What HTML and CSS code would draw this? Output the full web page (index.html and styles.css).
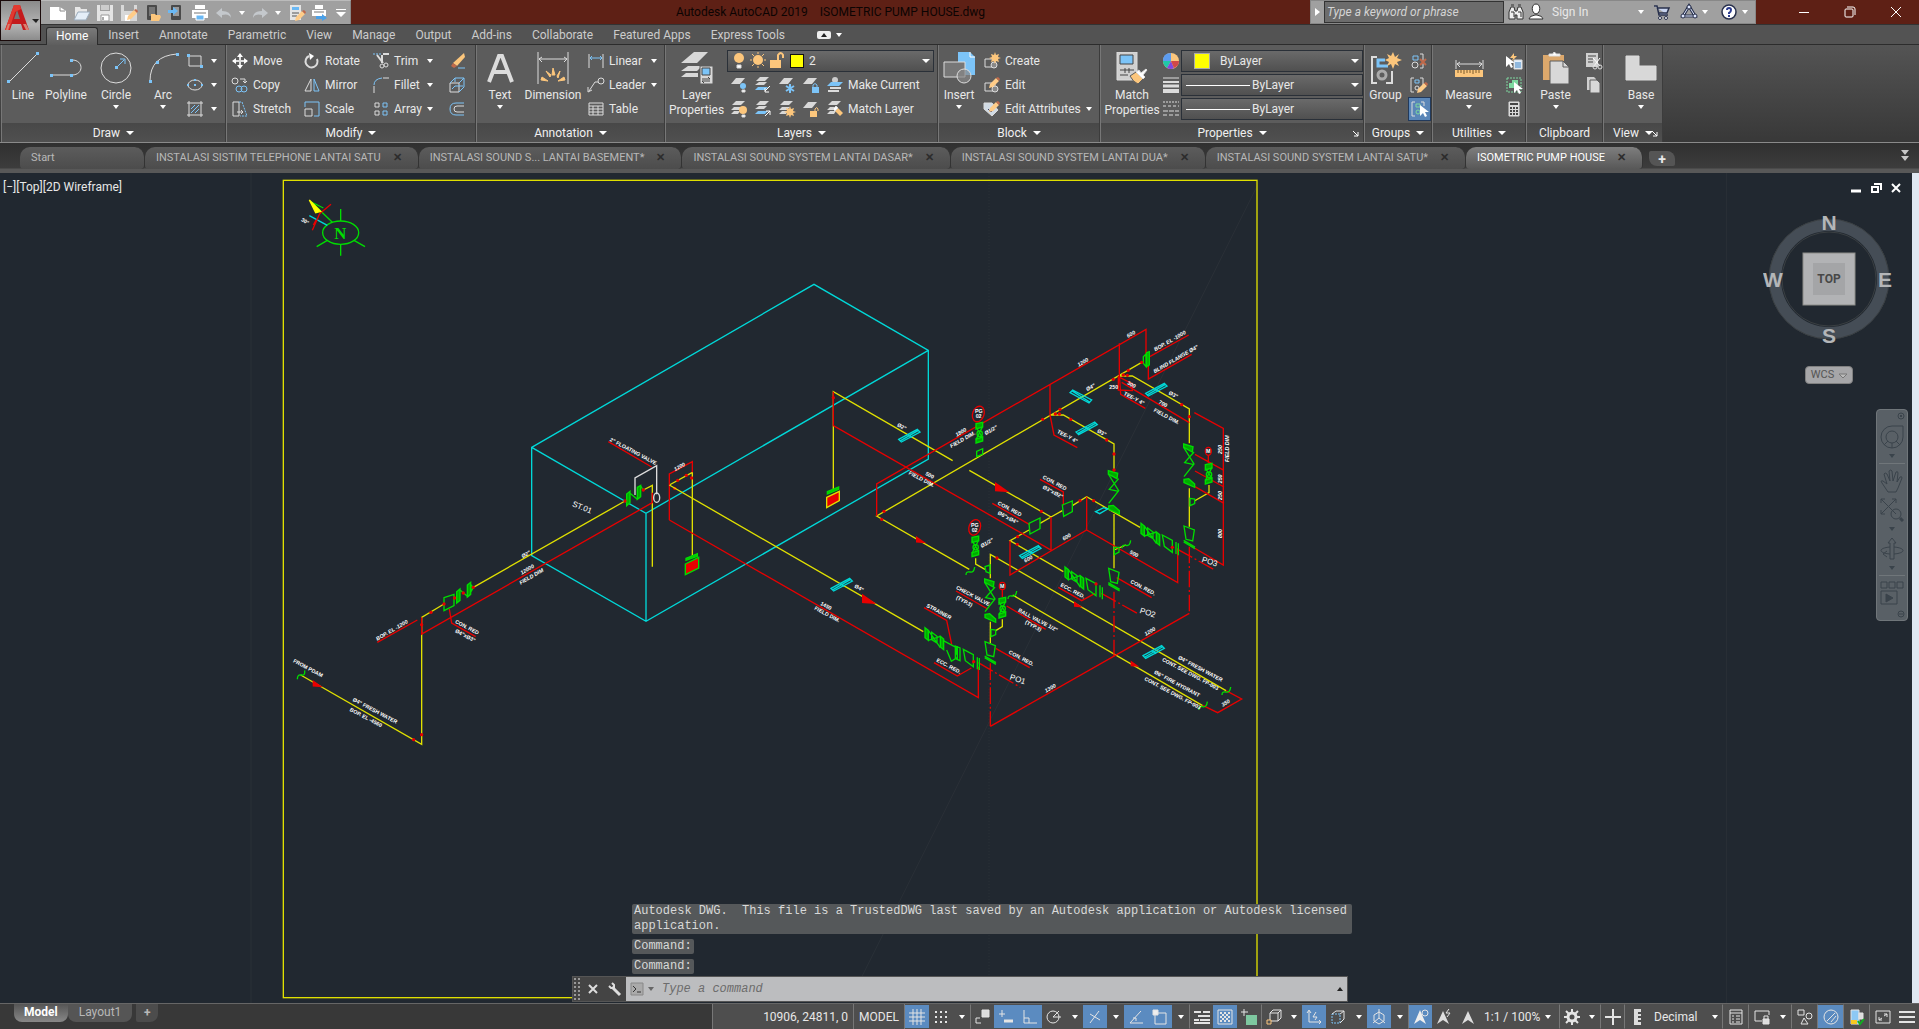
FILE: index.html
```html
<!DOCTYPE html>
<html lang="en">
<head>
  <meta charset="UTF-8" />
  <meta name="viewport" content="width=device-width, initial-scale=1.0" />
  <title>Autodesk AutoCAD 2019 - ISOMETRIC PUMP HOUSE.dwg</title>
  <link rel="stylesheet" href="styles.css">
</head>
<body>
  <!-- shared icon parts -->
  <svg class="defs" width="0" height="0" aria-hidden="true">
    <defs>
      <g id="sheet"><path d="M5 1h9l-5 6H0z" fill="#d8d8d8" stroke="none"/></g>
      <g id="stack"><path d="M5 0h9l-4 4H1zM3 6h8l-3 3H0zM3 10h6l-2 3H0z" fill="#d8d8d8" stroke="none"/></g>
      <g id="stackblue"><path d="M5 0h9l-4 4H1z" fill="#d8d8d8" stroke="none"/><path d="M4 5h8l-3 3H0z" fill="#d8d8d8" stroke="none"/><path d="M3 10h10l-3 3H0z" fill="#7cc4f8" stroke="none"/></g>
      <g id="pencil"><path d="M0 10l1-4 6-6 3 3-6 6z" fill="#fc8" stroke="none"/><path d="M7 0l3 3 1-2-2-2z" fill="#c0694a" stroke="none"/></g>
      <g id="spark"><path d="M5 0l1 3 3-1-1 3 3 1-3 1 1 3-3-1-1 3-1-3-3 1 1-3-3-1 3-1-1-3 3 1z" fill="#fcc67c" stroke="none"/></g>
      <g id="cursor"><path d="M0 0v11l3-3 2 4 2-1-2-4h4z" fill="#fff" stroke="none"/></g>
    </defs>
  </svg>

  <header class="titlebar">
    <button class="app-button" aria-label="Application menu">
      <svg width="38" height="38" viewBox="0 0 38 38">
        <path d="M3 28L12 3h6l9 25h-6l-2-6h-9l-2 6z" fill="#c41a1c"/>
        <path d="M12 17l3-9 3 9z" fill="#777"/><path d="M12 3h6l1 4-6 3-6 18H3z" fill="#e23a30"/>
        <path d="M8 22l-2 6H4l2-6zM21 22l3 6h3l-3-6z" fill="#d88070"/>
        <path d="M30 17h7l-3 4z" fill="#222"/>
      </svg>
    </button>
    <nav class="qat">
      <button aria-label="New"><svg class="ic" viewBox="0 0 16 16"><path d="M0 2h10l6 4v9H0z" fill="#fff"/><path d="M10 2v4h5" stroke="#888"/></svg></button>
      <button aria-label="Open"><svg class="ic" viewBox="0 0 16 16"><path d="M1 14V2h5l1 2h6v3" fill="#e8e8e8"/><path d="M4 7h12l-4 8H0z" fill="#e4eef8" stroke="#9ab"/></svg></button>
      <button aria-label="Save"><svg class="ic" viewBox="0 0 16 16"><path d="M0 0h3v6h10V0h3v16H0z" fill="#e4e4e4"/><path d="M4 0h8v5H4z" fill="#ccc"/><path d="M4 10h8v6H4z" fill="#fff" stroke="#999"/><path d="M6 12v3" stroke="#555"/></svg></button>
      <button aria-label="Save As"><svg class="ic" viewBox="0 0 16 16"><path d="M0 0h3v6h10V0h3v16H0z" fill="#d8d8d8"/><path d="M4 10h5v6H4z" fill="#fff"/><use href="#pencil" x="6" y="5"/></svg></button>
      <button aria-label="Open from mobile"><svg class="ic" viewBox="0 0 16 16"><rect x="2" y="0" width="10" height="15" rx="1" fill="#4a4a4a"/><path d="M4 2h6v9H4z" fill="#777"/><path d="M6 16V9h4l1 1h4l1 2-2 4z" fill="#fcc67c"/></svg></button>
      <button aria-label="Save to mobile"><svg class="ic" viewBox="0 0 16 16"><rect x="3" y="0" width="10" height="15" rx="1" fill="#4a4a4a"/><path d="M5 2h6v9H5z" fill="#999"/><path d="M0 5h5V2l5 4-5 4V8H0z" fill="#6ab8f4"/></svg></button>
      <button aria-label="Plot"><svg class="ic" viewBox="0 0 16 16"><path d="M3 0h10v4H3zM0 5h16v8H0z" fill="#fff"/><path d="M2 8h12" stroke="#777"/><path d="M4 10h8v5H4z" fill="#6ab8f4" stroke="#fff"/></svg></button>
      <button aria-label="Undo"><svg class="ic" viewBox="0 0 16 16"><path d="M6 3L0 8l6 5v-3q7-2 9 3 0-7-9-7z" fill="#c4c8cc"/></svg></button>
      <button class="tiny" aria-label="Undo list"><i class="dn"></i></button>
      <button aria-label="Redo"><svg class="ic" viewBox="0 0 16 16"><path d="M10 3l6 5-6 5v-3q-7-2-9 3 0-7 9-7z" fill="#c4c8cc"/></svg></button>
      <button class="tiny" aria-label="Redo list"><i class="dn"></i></button>
      <button aria-label="Match Properties"><svg class="ic" viewBox="0 0 16 16"><path d="M1 0h11v15H1z" fill="#e4e4e4"/><path d="M3 2h7v3H3z" fill="#6ab8f4"/><path d="M3 8h7M3 11h5" stroke="#555"/><use href="#pencil" x="6" y="6"/></svg></button>
      <button aria-label="Batch Plot"><svg class="ic" viewBox="0 0 16 16"><path d="M3 0h8v4H3zM0 5h14v6H0z" fill="#fff"/><path d="M2 7h10" stroke="#777"/><path d="M4 11h6V9l5 4-5 3v-2H4z" fill="#4aa0e8"/></svg></button>
      <button class="tiny" aria-label="Customize"><svg width="10" height="10" viewBox="0 0 10 10"><path d="M0 1h10v1H0zM0 4h10l-5 5z" fill="#fff"/></svg></button>
    </nav>
    <h1 class="title"><span>Autodesk AutoCAD 2019</span><span>ISOMETRIC PUMP HOUSE.dwg</span></h1>
    <div class="infocenter">
      <button class="expand" aria-label="Collapse search"><i class="rt"></i></button>
      <input type="text" class="keyword" placeholder="Type a keyword or phrase" aria-label="Type a keyword or phrase">
      <button aria-label="Search"><svg class="ic" viewBox="0 0 16 16"><path d="M1 15V8l2-5h3l1 4h2l1-4h3l2 5v7H9v-4H7v4z" fill="#eee" stroke="#333"/><path d="M3 8h3v5M10 8h3v5M3 1h3M10 1h3" stroke="#333"/></svg></button>
      <button class="signin"><svg class="ic" viewBox="0 0 16 16"><path d="M8 0c5 0 5 9 0 10-5-1-5-10 0-10zM1 15q0-3 6-4h2q6 1 6 4z" fill="#fff" stroke="#333"/></svg><span>Sign In</span><i class="dn"></i></button>
      <button aria-label="Autodesk App Store"><svg class="ic" viewBox="0 0 16 16"><path d="M0 2h3l2 9h9M4 4h11l-2 5H5" fill="#c8d4f0" stroke="#28304c" stroke-width="1.5"/><circle cx="6" cy="14" r="1.5" fill="#fff" stroke="#28304c"/><circle cx="12" cy="14" r="1.5" fill="#fff" stroke="#28304c"/></svg></button>
      <button class="wide" aria-label="Stay connected"><svg class="ic" viewBox="0 0 16 16"><path d="M8 2L2 12h12z" stroke="#28304c" stroke-width="3"/><path d="M8 2L2 12h12z" stroke="#e0e8ff"/><g fill="#e0e8ff" stroke="#28304c"><circle cx="8" cy="3" r="2"/><circle cx="2" cy="12" r="2"/><circle cx="14" cy="12" r="2"/></g></svg><i class="dn"></i></button>
      <button class="wide" aria-label="Help"><svg class="ic" viewBox="0 0 16 16"><circle cx="8" cy="8" r="7" fill="#fff" stroke="#28304c" stroke-width="1.5"/><path d="M6 6q0-2 2-2t2 2-2 3v1M8 11v2" stroke="#2c3c90" stroke-width="2"/></svg><i class="dn"></i></button>
    </div>
    <div class="window-buttons">
      <button aria-label="Minimize"><svg width="12" height="12" viewBox="0 0 12 12"><path d="M1 6.500h10" stroke="#fff"/></svg></button>
      <button aria-label="Restore"><svg width="12" height="12" viewBox="0 0 12 12"><rect x="1" y="3" width="8" height="8" rx="1" stroke="#fff"/><path d="M3 1h6q2 0 2 2v6" stroke="#fff"/></svg></button>
      <button aria-label="Close"><svg width="12" height="12" viewBox="0 0 12 12"><path d="M1 1l10 10M11 1L1 11" stroke="#fff"/></svg></button>
    </div>
  </header>

  <nav class="ribbon-tabs">
    <a href="#home" class="active">Home</a><a href="#insert">Insert</a><a href="#annotate">Annotate</a><a href="#parametric">Parametric</a><a href="#view">View</a><a href="#manage">Manage</a><a href="#output">Output</a><a href="#addins">Add-ins</a><a href="#collab">Collaborate</a><a href="#featured">Featured Apps</a><a href="#express">Express Tools</a>
    <button class="ribbon-toggle" aria-label="Minimize ribbon"><span><i class="up dark"></i></span><i class="dn"></i></button>
  </nav>

  <main class="ribbon" id="home">
    <section class="panel draw">
      <div class="panel-body">
        <button class="big"><svg class="ig" viewBox="0 0 32 32"><path d="M2 30L30 2"/><g class="bf"><path d="M0 28h3v3H0zM29 0h3v3h-3z"/></g></svg>Line</button>
        <button class="big"><svg class="ig" viewBox="0 0 32 32"><path d="M2 23h20M22 8c12 0 12 15 0 15"/><g class="bf"><path d="M0 22h3v3H0zM20 22h3v3h-3zM20 7h3v3h-3z"/></g></svg>Polyline</button>
        <button class="big"><svg class="ig" viewBox="0 0 32 32"><circle cx="16" cy="16" r="15"/><path class="b" d="M16 16l8-8M20 7h5v5"/><path class="bf" d="M15 14h3v3h-3z"/></svg>Circle<i class="dn"></i></button>
        <button class="big"><svg class="ig" viewBox="0 0 32 32"><path d="M3 29Q3 4 30 2"/><g class="bf"><path d="M2 28h3v3H2zM9 9h3v3H9zM29 1h3v3h-3z"/></g></svg>Arc<i class="dn"></i></button>
        <div class="col">
          <button class="small" aria-label="Rectangle"><svg class="ic" viewBox="0 0 16 16"><path d="M2 3h12v10H2z"/><path class="bf" d="M0 1h3v3H0zM13 12h3v3h-3z"/></svg><i class="dn"></i></button>
          <button class="small" aria-label="Ellipse"><svg class="ic" viewBox="0 0 16 16"><ellipse cx="8" cy="8" rx="7" ry="5"/><path class="bf" d="M0 7h2v2H0zM7 7h2v2H7zM14 7h2v2h-2zM7 2h2v2H7z"/></svg><i class="dn"></i></button>
          <button class="small" aria-label="Hatch"><svg class="ic" viewBox="0 0 16 16"><path d="M0 2h16M0 14h16M2 0v16M14 0v16"/><path class="b" d="M4 8l4-4M4 12l8-8M8 12l4-4"/></svg><i class="dn"></i></button>
        </div>
      </div>
      <h2>Draw <i class="dn"></i></h2>
    </section>

    <section class="panel modify">
      <div class="panel-body">
        <div class="col">
          <button class="small"><svg class="ic" viewBox="0 0 16 16"><path d="M8 1v14M1 8h14" stroke-width="2"/><path class="wf" d="M8 0l3 4H5zM8 16l3-4H5zM0 8l4-3v6zM16 8l-4-3v6z"/></svg>Move</button>
          <button class="small"><svg class="ic" viewBox="0 0 16 16"><circle cx="3" cy="4" r="3"/><path d="M8 2h5v4M11 4l2 2 2-2"/><g class="b"><circle cx="7" cy="12" r="3"/><circle cx="12" cy="12" r="3"/></g></svg>Copy</button>
          <button class="small"><svg class="ic" viewBox="0 0 16 16"><path d="M1 1h6v14H1zM5 11h6M9 9l2 2-2 2"/><path class="b" stroke-dasharray="2 1" d="M7 1h3l5 14H8"/></svg>Stretch</button>
        </div>
        <div class="col">
          <button class="small"><svg class="ic" viewBox="0 0 16 16"><path d="M5 3a6 6 0 1 0 8 3" stroke-width="2"/><path class="wf" d="M5 0l5 3-4 4z"/></svg>Rotate</button>
          <button class="small"><svg class="ic" viewBox="0 0 16 16"><path d="M7 2v12H1z"/><path class="b" d="M10 2v12h5z"/></svg>Mirror</button>
          <button class="small"><svg class="ic" viewBox="0 0 16 16"><path class="b" d="M1 6V1h14v14h-5"/><path d="M1 8h7v7H1z"/></svg>Scale</button>
        </div>
        <div class="col">
          <button class="small"><svg class="ic" viewBox="0 0 16 16"><path class="b" stroke-dasharray="2 1" d="M0 1h8"/><path d="M10 1h6M4 2l6 8M9 2v8" stroke-width="2"/><circle cx="9" cy="13" r="2"/><circle cx="13" cy="12" r="2"/></svg><span>Trim</span><i class="dn"></i></button>
          <button class="small"><svg class="ic" viewBox="0 0 16 16"><path d="M1 16V9M10 1h6"/><path class="b" d="M1 8q0-6 8-7"/></svg><span>Fillet</span><i class="dn"></i></button>
          <button class="small"><svg class="ic" viewBox="0 0 16 16"><path d="M2 2h4v4H2zM2 10h4v4H2z"/><path class="b" d="M10 2h4v4h-4zM10 10h4v4h-4z"/></svg><span>Array</span><i class="dn"></i></button>
        </div>
        <div class="col">
          <button class="small" aria-label="Erase"><svg class="ic" viewBox="0 0 16 16"><path d="M15 0l1 4-8 9-4-3z" fill="#fcc67c" stroke="none"/><path d="M4 10l4 3-3 2-3-2z" fill="#c0694a" stroke="none"/><path class="b" d="M9 15h7"/></svg></button>
          <button class="small" aria-label="Explode"><svg class="ic" viewBox="0 0 16 16"><path d="M1 6h9v9H1z"/><path class="b" d="M1 6l5-5h9v9l-5 5M10 6l5-5M6 1v4M3 12l3-3h8"/></svg></button>
          <button class="small" aria-label="Offset"><svg class="ic" viewBox="0 0 16 16"><path class="b" d="M15 2H7Q1 2 1 8t6 6h8"/><path d="M15 5H8Q5 5 5 8t3 3h7"/></svg></button>
        </div>
      </div>
      <h2>Modify <i class="dn"></i></h2>
    </section>

    <section class="panel annotation">
      <div class="panel-body">
        <button class="big"><svg class="ig" viewBox="0 0 32 32"><path d="M5 30L15 4h3l10 26M9 20h15" stroke-width="4"/></svg>Text<i class="dn"></i></button>
        <button class="big"><svg class="ig" viewBox="0 0 32 32"><path d="M1 0v32M31 0v32M2 7h28M5 5L2 7l3 3M27 5l3 2-3 3"/><path d="M4 28l7 1-6-4zM9 19l4 6 1-2zM16 16l-1 7h3zM23 19l-3 5 1 2zM28 28l-7 1 6-4z" fill="#fcc67c" stroke="#fcc67c"/></svg>Dimension</button>
        <div class="col">
          <button class="small"><svg class="ic" viewBox="0 0 16 16"><path d="M1 1v14M15 1v14"/><path class="b" d="M2 5h12M4 3L2 5l2 2M12 3l2 2-2 2"/></svg><span>Linear</span><i class="dn"></i></button>
          <button class="small"><svg class="ic" viewBox="0 0 16 16"><circle cx="13" cy="4" r="3"/><path d="M10 5H7L1 14M0 10v5l4-2"/></svg><span>Leader</span><i class="dn"></i></button>
          <button class="small"><svg class="ic" viewBox="0 0 16 16"><path d="M1 2h14v12H1zM1 5h14M1 8h14M1 11h14M5 5v9M10 5v9"/></svg>Table</button>
        </div>
      </div>
      <h2>Annotation <i class="dn"></i></h2>
    </section>

    <section class="panel layers">
      <div class="panel-body">
        <button class="big"><svg class="ig" viewBox="0 0 32 32"><g fill="#d8d8d8" stroke="none"><path d="M13 0h14L16 11H0zM7 14h14l-5 5H0zM5 21h12v4H0z"/><path d="M19 14h13v18H19z" stroke="#5c5c5c"/></g><path d="M21 16h8v7h-8z" fill="#7cc4f8" stroke="#444"/><path d="M21 27h8l-2-2M29 29h-8l2 2" stroke="#444"/></svg>Layer<br>Properties</button>
        <div class="col layer-col">
          <div class="combo layer-combo">
            <svg width="52" height="18" viewBox="0 0 52 18"><g fill="#fcc67c" stroke="none"><circle cx="7" cy="6" r="5"/><circle cx="26" cy="8" r="5"/><path d="M38 8h11v8H38z"/></g><path d="M5 13h4v3H5z" fill="#fff"/><path d="M26 0v2M26 14v2M18 8h2M32 8h2M20 2l2 2M32 2l-2 2M20 14l2-2M32 14l-2-2" stroke="#fcc67c"/><path d="M46 8V3q3-4 5 0v3" stroke="#fcc67c" stroke-width="2"/></svg>
            <span class="swatch"></span>
            <select aria-label="Layer"><option>2</option></select><i class="dn"></i>
          </div>
          <div class="icon-row">
            <button class="small" aria-label="Off"><svg class="ic" viewBox="0 0 16 16"><use href="#sheet"/><circle cx="12" cy="9" r="3" class="bf"/><path d="M11 13h3v2h-3z" fill="#fff"/></svg></button>
            <button class="small" aria-label="Isolate"><svg class="ic" viewBox="0 0 16 16"><use href="#stackblue"/><path d="M15 9l-5 5M10 11v4h4" stroke="#fff"/></svg></button>
            <button class="small" aria-label="Freeze"><svg class="ic" viewBox="0 0 16 16"><use href="#sheet"/><path class="b" d="M11 7v9M7 9l8 5M15 9l-8 5" stroke-width="2"/></svg></button>
            <button class="small" aria-label="Lock"><svg class="ic" viewBox="0 0 16 16"><use href="#sheet"/><path class="bf" d="M9 10h7v6H9z"/><path class="b" d="M10 10V8q2-3 4 0v2"/></svg></button>
            <button class="small"><svg class="ic" viewBox="0 0 16 16"><circle cx="8" cy="3" r="3" fill="#ccc" stroke="none"/><path class="bf" d="M4 5h12l-4 4H0z"/><path d="M3 11h11M1 14h11" stroke-width="2"/></svg>Make Current</button>
          </div>
          <div class="icon-row">
            <button class="small" aria-label="Turn all on"><svg class="ic" viewBox="0 0 16 16"><use href="#stack"/><circle cx="12" cy="9" r="4" fill="#fcc67c" stroke="none"/><path d="M11 14h3v2h-3z" fill="#fff"/></svg></button>
            <button class="small" aria-label="Unisolate"><svg class="ic" viewBox="0 0 16 16"><use href="#stackblue"/><path d="M10 15l5-5M11 10h4v4" stroke="#fff"/></svg></button>
            <button class="small" aria-label="Thaw"><svg class="ic" viewBox="0 0 16 16"><use href="#stack"/><use href="#spark" x="6" y="5"/></svg></button>
            <button class="small" aria-label="Unlock"><svg class="ic" viewBox="0 0 16 16"><use href="#sheet"/><path fill="#fcc67c" stroke="none" d="M7 10h7v6H7z"/><path d="M12 10V8q2-3 3 0v2" stroke="#fcc67c"/></svg></button>
            <button class="small"><svg class="ic" viewBox="0 0 16 16"><use href="#stack"/><path d="M7 9l3-3 6 6-3 3z" fill="#fcc67c" stroke="none"/><path d="M6 8l3-3 2 2-3 3z" fill="#fff"/></svg>Match Layer</button>
          </div>
        </div>
      </div>
      <h2>Layers <i class="dn"></i></h2>
    </section>

    <section class="panel block">
      <div class="panel-body">
        <button class="big"><svg class="ig" viewBox="0 0 32 32"><path class="bf" d="M15 0h12l5 5v18H15z"/><path d="M27 0v5h5" stroke="#fff"/><path d="M1 10h21v15H1z" fill="#777"/><circle cx="21" cy="24" r="7" fill="#888" fill-opacity=".7"/></svg>Insert<i class="dn"></i></button>
        <div class="col">
          <button class="small"><svg class="ic" viewBox="0 0 16 16"><path d="M1 6h10v8H1z"/><circle cx="10" cy="12" r="3" fill="#888"/><use href="#spark" x="6" y="-1"/></svg>Create</button>
          <button class="small"><svg class="ic" viewBox="0 0 16 16"><path d="M1 6h10v8H1z"/><circle cx="11" cy="12" r="3" fill="#888"/><use href="#pencil" x="5" y="1"/></svg>Edit</button>
          <button class="small"><svg class="ic" viewBox="0 0 16 16"><path d="M0 2h8l6 7-6 6-8-7z" fill="#d0dae4"/><path d="M4 8l3 3 5-6" stroke="#446" /><use href="#pencil" x="5" y="1"/></svg><span>Edit Attributes</span><i class="dn"></i></button>
        </div>
      </div>
      <h2>Block <i class="dn"></i></h2>
    </section>

    <section class="panel properties">
      <div class="panel-body">
        <button class="big"><svg class="ig" viewBox="0 0 32 32"><path d="M1 0h20v28H1z" fill="#d0d0d0"/><path d="M4 3h13v9H4z" fill="#7cc4f8" stroke="#444"/><path d="M4 18h14M9 16v5M13 16v5M4 23h8" stroke="#444"/><path d="M14 24l6-4 7 7-5 5q-5-2-8-8z" fill="#fcc67c" stroke="#5c5c5c"/><path d="M20 20l3-2 2 3 5-4 1 1-4 5 2 2-2 2z" fill="#fff"/></svg>Match<br>Properties</button>
        <div class="col prop-icons">
          <svg class="ic" viewBox="0 0 16 16"><g stroke="none"><circle cx="8" cy="8" r="8" fill="#fcc67c"/><path d="M8 8V0Q0 0 0 8z" fill="#5c9cf0"/><path d="M8 8H0q0 4 4 7z" fill="#20c8a8"/><path d="M8 8l-4 7q4 2 7 0z" fill="#8048e0"/><path d="M8 8l3 7q5-2 5-7z" fill="#d04848"/></g></svg>
          <svg class="ic" viewBox="0 0 16 16"><path d="M0 1h16"/><path d="M0 5h16" stroke-width="2"/><path d="M0 9h16" stroke-width="3"/><path d="M0 14h16" stroke-width="4"/></svg>
          <svg class="ic" viewBox="0 0 16 16"><path d="M0 1h16" stroke-dasharray="2 1"/><path d="M0 5h16" stroke-dasharray="3 2"/><path d="M0 10h16" stroke-dasharray="5 1"/><path d="M0 14h16" stroke-dasharray="4 2"/></svg>
        </div>
        <div class="col prop-combos">
          <div class="combo"><span class="swatch pale"></span><select aria-label="Object color"><option>ByLayer</option></select><i class="dn"></i></div>
          <div class="combo"><span class="rule"></span><select aria-label="Lineweight"><option>ByLayer</option></select><i class="dn"></i></div>
          <div class="combo"><span class="rule"></span><select aria-label="Linetype"><option>ByLayer</option></select><i class="dn"></i></div>
        </div>
      </div>
      <h2>Properties <i class="dn"></i><svg class="launcher" width="7" height="7" viewBox="0 0 7 7"><path d="M1 1l5 5M6 2v4H2" stroke="#fff"/></svg></h2>
    </section>

    <section class="panel groups">
      <div class="panel-body">
        <button class="big"><svg class="ig" viewBox="0 0 32 32"><path d="M7 5H2v26h5M16 31h6V19" stroke-width="2"/><path class="b" d="M15 8H8v6h10" stroke-width="3"/><circle cx="12" cy="23" r="4" stroke-width="3" stroke="#aaa"/><g transform="translate(15 0)"><path d="M8 0l2 5 4-3-2 4 5 2-5 2 2 4-4-2-2 5-2-5-4 2 2-4-4-2 4-2-2-4 4 2z" fill="#fcc67c" stroke="none"/></g></svg>Group</button>
        <div class="col">
          <button class="small" aria-label="Ungroup"><svg class="ic" viewBox="0 0 16 16"><path class="b" d="M2 3h5v4H2z"/><circle cx="4" cy="12" r="3"/><path d="M9 1h3v14H9"/><path d="M9 6l6 6M15 6l-6 6" stroke="#c0694a" stroke-width="2"/></svg></button>
          <button class="small" aria-label="Group edit"><svg class="ic" viewBox="0 0 16 16"><path class="b" d="M4 3h4v3H4z"/><circle cx="6" cy="11" r="2"/><path d="M3 1H0v14h3M9 1h3v7"/><use href="#pencil" x="6" y="6"/></svg></button>
          <button class="small on" aria-label="Group selection"><svg class="ic" viewBox="0 0 16 16"><path d="M4 3h4v3H4z" stroke="#7ed8a0"/><circle cx="6" cy="11" r="2" stroke="#7ed8a0"/><path d="M3 1H0v14h3M9 1h3v4"/><use href="#cursor" x="8" y="4"/></svg></button>
        </div>
      </div>
      <h2>Groups <i class="dn"></i></h2>
    </section>

    <section class="panel utilities">
      <div class="panel-body">
        <button class="big"><svg class="ig" viewBox="0 0 32 32"><path d="M3 8v9M30 8v9M4 12h25M7 10l-3 2 3 3M26 10l3 2-3 3"/><path d="M2 18h28v7H2z" fill="#fcc67c" stroke="none"/><path d="M5 18v3M8 18v3M11 18v4M14 18v3M17 18v3M20 18v4M23 18v3M26 18v3" stroke="#7a5a2a"/></svg>Measure<i class="dn"></i></button>
        <div class="col">
          <button class="small" aria-label="Quick Select"><svg class="ic" viewBox="0 0 16 16"><use href="#cursor" x="0" y="3"/><path d="M8 0L4 5h3l-1 3 5-5H8z" fill="#fcc67c" stroke="none"/><path d="M8 7h8v9H8z" fill="#e4f0fc"/><path d="M9 10h6M9 12h6M9 14h6" stroke="#3c80c0"/></svg></button>
          <button class="small" aria-label="Select All"><svg class="ic" viewBox="0 0 16 16"><path d="M1 1h14v14H1z" stroke="#7ed8a0" stroke-dasharray="2 1"/><path d="M6 3h6v8H3V6h3z" fill="#7ed8a0" stroke="none"/><use href="#cursor" x="8" y="5"/></svg></button>
          <button class="small" aria-label="Calculator"><svg class="ic" viewBox="0 0 16 16"><path d="M3 1h10v14H3z" fill="#d8d8d8"/><path d="M4 3h8" stroke="#444" stroke-width="2"/><path d="M4 7h8M4 10h8M4 13h8" stroke="#444" stroke-width="2" stroke-dasharray="2 1"/></svg></button>
        </div>
      </div>
      <h2>Utilities <i class="dn"></i></h2>
    </section>

    <section class="panel clipboard">
      <div class="panel-body">
        <button class="big"><svg class="ig" viewBox="0 0 32 32"><path d="M3 3h21v25H3z" fill="#dca86c" stroke="none"/><path d="M9 4V2h4q1-4 3 0h4v2z" fill="#fff"/><path d="M10 9h13l6 6v17H10z" fill="#d8d8d8" stroke="#5c5c5c"/><path d="M23 9v6h6" stroke="#5c5c5c"/></svg>Paste<i class="dn"></i></button>
        <div class="col">
          <button class="small" aria-label="Cut"><svg class="ic" viewBox="0 0 16 16"><path d="M0 0h12v14H0z" fill="#d0d0d0" stroke="none"/><path d="M2 3h8M2 6h5M2 9h5" stroke="#444"/><path d="M7 5l7 8M14 5l-6 8" stroke="#fff"/><circle cx="9" cy="14" r="2"/><circle cx="14" cy="14" r="2"/></svg></button>
          <button class="small" aria-label="Copy clip"><svg class="ic" viewBox="0 0 16 16"><path d="M1 0h7l2 2v11H1z" fill="#d0d0d0" stroke="none"/><path d="M4 3h7l3 3v10H4z" fill="#d8d8d8" stroke="#5c5c5c"/></svg></button>
        </div>
      </div>
      <h2>Clipboard</h2>
    </section>

    <section class="panel view">
      <div class="panel-body">
        <button class="big"><svg class="ig" viewBox="0 0 32 32"><path d="M1 4h13v10h17v14H1z" fill="#d8d8d8"/></svg>Base<i class="dn"></i></button>
      </div>
      <h2>View <i class="dn"></i><svg class="launcher" width="7" height="7" viewBox="0 0 7 7"><path d="M1 1l5 5M6 2v4H2" stroke="#fff"/></svg></h2>
    </section>
  </main>

  <nav class="file-tabs">
    <a href="#start">Start</a>
    <a href="#f1">INSTALASI SISTIM TELEPHONE LANTAI SATU<b>✕</b></a>
    <a href="#f2">INSTALASI SOUND S... LANTAI BASEMENT*<b>✕</b></a>
    <a href="#f3">INSTALASI SOUND SYSTEM LANTAI DASAR*<b>✕</b></a>
    <a href="#f4">INSTALASI SOUND SYSTEM LANTAI DUA*<b>✕</b></a>
    <a href="#f5">INSTALASI SOUND SYSTEM LANTAI SATU*<b>✕</b></a>
    <a href="#f6" class="active">ISOMETRIC PUMP HOUSE<b>✕</b></a>
    <button class="add" aria-label="New drawing">+</button>
    <button class="more" aria-label="More tabs"><svg width="8" height="12" viewBox="0 0 8 12"><path d="M0 0h8L4 5zM0 6h8l-4 5z" fill="#c8c8c8"/></svg></button>
  </nav>

  <div class="workspace">
    <!-- drawing units: 3 per pixel -->
    <svg class="drawing" viewBox="0 0 5736 2490" preserveAspectRatio="xMinYMin meet">
      <defs>
        <g id="check"><path d="M-17 2l28 8-2 16-26-14zM-16 108l14-2 18 16v10l-32-14z" fill="#0a0" /><path d="M-17 12L14 62-16 100M14 26L-14 58l28 6"/></g>
        <g id="red-v"><path d="M-16 0L15 12 10 45-10 40zM-17 43l34 20M-17 48l34 20"/></g>
        <g id="cock"><path d="M-11 4l20-4v14l-20 6zM-11 62V50l20-6v12z" fill="#0a0"/><circle cy="34" r="8"/><path d="M-11 14l20 32M9 12l-20 40"/></g>
        <g id="gate"><path d="M0-12l10 8v30L0 18zM46 14l10 8v32l-10-8z" fill="#0a0"/><path d="M10-4L46 48M10 26l36-12M20 2l16 12v20L20 24z"/></g>
        <g id="red-d"><path d="M0-2l30 16v36L6 32z"/></g>
        <g id="union"><path d="M-32 10L24-20l8 8-56 30zM-26 14l52-30M-4-4l12 8" /></g>
        <path id="flow" d="M0-14l44 31L0 14z" fill="#e80000" stroke="none"/>
        <path id="break" d="M-14 12q0-12 12-9T12-12"/>
        <circle id="weld" r="5" fill="#e80000" stroke="none"/>
      </defs>

      <g class="faint"><path d="M753 0v2490M5180 0v2490M3771 40L2565 2452"/><path d="M2967 0v2490" stroke-dasharray="3 6"/></g>
      <rect class="y" x="850" y="22" width="2921" height="2452"/>

      <!-- tank outline -->
      <path class="c" d="M1595 823L2442 334 2785 532V858L1938 1345 1595 1148zL1938 1021 2785 532M1938 1021v324"/>

      <!-- north arrow -->
      <g transform="translate(840 21)">
        <g class="g"><ellipse cx="182" cy="158" rx="54" ry="35"/><path d="M182 87v36M182 193v34M110 200l32-19M222 181l33 19M157 127L94 66l36 18"/></g>
        <path class="c" d="M88 107l54 29"/><path class="r" d="M153 73l-34 28-22 50M100 135l8-15"/>
        <path d="M88 60l34 34-15 4z" fill="#ff0" stroke="#ff0"/>
        <text class="north" x="163" y="176">N</text><text class="note" transform="translate(62 122) rotate(30)">30°</text>
      </g>

      <!-- supply line and tank inlet -->
      <g transform="translate(840 771)">
        <path class="y" d="M62 735L425 943V562l67-40M580 472l455-259M1090 180l27-14v244M1237 380V127l-69 38"/>
        <path class="r" d="M425 562v50L1117 218v-30M292 637l120-67M508 537l7 42 72 41M985 35l130 76M1168 165v-33l69-37v32M1168 165v105"/>
        <path class="w" d="M1065 195v-51l65-37v86"/><ellipse class="w" cx="1130" cy="203" rx="9" ry="14"/>
        <g class="g">
          <path d="M492 503l30-10v34l-30 15zM540 480l24 20"/>
          <path d="M530 485l10-8v34l-10 8zM562 465l10-8v36l-10 8zM572 463l8 10-8 14zM1040 192l10-8v34l-10 9zM1072 172l10-6v34l-10 8z" fill="#0a0"/>
          <path d="M1050 190l22 18M1082 168l8 12"/>
          <path d="M1218 385l34-14v8l-34 12z" fill="#0c0"/><path d="M52 748q0-16 12-13t10-14"/>
          <path d="M1216 402l40-20v32l-40 20z" fill="#e80000"/>
        </g>
        <use href="#flow" transform="translate(98 760) scale(.7)"/>
        <use href="#weld" x="401" y="929"/><use href="#weld" x="425" y="914"/><use href="#weld" x="425" y="584"/><use href="#weld" x="453" y="547"/><use href="#weld" x="492" y="522"/><use href="#weld" x="524" y="504"/><use href="#weld" x="550" y="489"/><use href="#weld" x="580" y="472"/><use href="#weld" x="1035" y="213"/><use href="#weld" x="1090" y="180"/><use href="#weld" x="1193" y="151"/><use href="#weld" x="1219" y="136"/><use href="#weld" x="1235" y="144"/><use href="#weld" x="1184" y="175"/>
        <text class="tag" transform="translate(875 228) rotate(22)">ST.01</text>
        <g class="note">
          <text transform="translate(988 32) rotate(28)">2" FLOATING VALVE</text>
          <text transform="translate(38 696) rotate(28)">FROM PDAM</text>
          <text transform="translate(217 812) rotate(28)">Ø4" FRESH WATER</text>
          <text transform="translate(208 842) rotate(28)">BOP. EL -4560</text>
          <text transform="translate(524 578) rotate(28)">CON. RED</text>
          <text transform="translate(524 606) rotate(28)">Ø4"xØ3"</text>
        </g>
        <g class="note up">
          <text transform="translate(292 632) rotate(-30)">BOP. EL -1200</text>
          <text transform="translate(728 385) rotate(-30)">Ø2"</text>
          <text transform="translate(725 434) rotate(-30)">12000</text>
          <text transform="translate(722 464) rotate(-30)">FIELD DIM</text>
          <text transform="translate(1186 124) rotate(-30)">1200</text>
        </g>
      </g>

      <!-- pump suction and discharge -->
      <g transform="translate(2550 411)">
        <path class="y" d="M-542 525L220 965M-50 540V245L308 452M358 481l245 140-33 19M537 660l-57 32 160 93M603 621l34-19M667 587l43-27 160 92M875 157L80 618l278 160M600 315h40l152 87v78M792 612v163M808 198h39l171 99v103M1018 535v115M421 805v-72l707 409M421 935v65M488 855l570 332M377 745v17l28 16M457 928v22l-20 12M1077 525v23l-44 25M792 720l36-15"/>
        <path class="r" d="M-542 630L385 1163v-93M-50 245v102L603 720V621M80 618v-96L888 58v87M600 225v90l12 60 70 38M808 100v95l4 58 74 42M480 692v103l230-135 273 158V715M710 560v100M1033 308l87 47v410l-102-60M1035 433l87 48M1035 483l87 48M1035 530l87 50M1018 910L421 1249M1128 1142l47 25-72 41-45-22M895 150v57l130-74M895 142l121-67M805 240v-40l42 22v20zM815 217l203 121M570 508l70 38v40M427 580l112 64M800 803l105 60M625 832l70 40 40-22M222 893l68 38 15 72M252 1058l70 40 42-24M437 1015l102 58M318 843l95 54M470 888l117 70M1075 435v25M457 838v24"/>
        <path class="r" stroke-dasharray="50 8 6 8" d="M792 845v195M1018 710v200M421 1060v189M754 850l108 60M983 718l108 60M385 1058l126 74"/>
        <g class="g">
          <use href="#check" x="792" y="480"/><use href="#check" x="1018" y="400"/><use href="#check" x="421" y="805"/>
          <use href="#red-v" x="792" y="775"/><use href="#red-v" x="1018" y="648"/><use href="#red-v" x="421" y="995"/>
          <use href="#cock" x="389" y="337"/><use href="#cock" x="377" y="678"/><use href="#cock" x="1077" y="460"/><use href="#cock" x="458" y="862"/>
          <use href="#gate" x="645" y="783"/><use href="#gate" x="873" y="652"/><use href="#gate" x="225" y="965"/>
          <use href="#red-d" x="708" y="807"/><use href="#red-d" x="937" y="677"/><use href="#red-d" x="340" y="1020"/>
          <path d="M750 826v36M757 832v36M978 696v36M985 700v36M382 1042v36M388 1044v36M280 992l38 20v22M290 1020l14 34 18-12M316 1008l14 6v38l-14-6zM322 1008v40"/>
          <path d="M537 640l33-16v32l-30 16zM637 585l30-12v32l-26 14zM380 424l18-8v16l-18 8zM405 770l15-5v25l-12-5zM423 958l14 2v14l-14 6zM1020 565l14 2v14l-14 6zM793 712l14 0v14l-14 8zM880 140l8-8v38l-8-10z"/>
          <path d="M890 128l8-3v40l-8 5z" fill="#0a0"/>
          <use href="#break" x="362" y="783"/><use href="#break" x="488" y="855"/><use href="#break" x="830" y="703"/><use href="#break" x="1130" y="1143"/><use href="#break" x="1060" y="1187"/>
        </g>
        <g class="c"><use href="#union" x="178" y="378"/><use href="#union" x="710" y="356"/><use href="#union" x="919" y="240"/><use href="#union" x="541" y="727"/><use href="#union" x="911" y="1027"/><use href="#union" x="-25" y="825"/><path d="M660 248l8-8 57 30-8 9zM665 242l54 34M737 605l24-12 12 4-24 14z"/></g>
        <g class="r"><ellipse cx="385" cy="312" rx="17" ry="24" transform="rotate(20 385 312)"/><ellipse cx="374" cy="652" rx="17" ry="24" transform="rotate(20 374 652)"/><ellipse cx="457" cy="828" rx="9" ry="11"/><ellipse cx="1075" cy="424" rx="9" ry="12"/></g>
        <use href="#flow" x="435" y="530"/><use href="#flow" transform="translate(198 688) scale(.7)"/><use href="#flow" x="36" y="865"/><use href="#flow" transform="translate(672 882) scale(.6)"/><use href="#flow" transform="translate(842 1060) scale(.6)"/>
        <use href="#weld" x="102" y="604"/><use href="#weld" x="95" y="628"/><use href="#weld" x="578" y="328"/><use href="#weld" x="616" y="312"/><use href="#weld" x="628" y="312"/><use href="#weld" x="630" y="298"/><use href="#weld" x="662" y="328"/><use href="#weld" x="770" y="390"/><use href="#weld" x="792" y="432"/><use href="#weld" x="792" y="480"/><use href="#weld" x="790" y="208"/><use href="#weld" x="820" y="195"/><use href="#weld" x="832" y="196"/><use href="#weld" x="835" y="181"/><use href="#weld" x="875" y="157"/><use href="#weld" x="995" y="284"/><use href="#weld" x="1018" y="320"/><use href="#weld" x="574" y="604"/><use href="#weld" x="503" y="680"/><use href="#weld" x="502" y="703"/><use href="#weld" x="690" y="572"/><use href="#weld" x="731" y="572"/><use href="#weld" x="441" y="744"/><use href="#weld" x="738" y="822"/><use href="#weld" x="967" y="712"/><use href="#weld" x="371" y="1055"/><use href="#weld" x="-50" y="263"/>
        <g class="tag"><text transform="translate(868 908) rotate(18)">PO2</text><text transform="translate(1054 755) rotate(18)">PO3</text><text transform="translate(478 1108) rotate(18)">PO1</text></g>
        <g class="note">
          <text transform="translate(140 348) rotate(28)">Ø2"</text><text transform="translate(12 832) rotate(28)">Ø4"</text>
          <text transform="translate(225 494) rotate(28)">500</text><text transform="translate(175 492) rotate(28)">FIELD DIM.</text>
          <text transform="translate(-90 884) rotate(28)">1450</text><text transform="translate(-108 898) rotate(28)">FIELD DIM.</text>
          <text transform="translate(577 505) rotate(28)">CON. RED</text><text transform="translate(577 535) rotate(28)">Ø3"xØ2"</text>
          <text transform="translate(442 583) rotate(28)">CON. RED</text><text transform="translate(442 612) rotate(28)">Ø6"xØ4"</text>
          <text transform="translate(620 368) rotate(28)">TEE-Y 4"</text><text transform="translate(820 254) rotate(28)">TEE-Y 4"</text>
          <text transform="translate(740 366) rotate(28)">Ø3"</text><text transform="translate(955 252) rotate(28)">Ø3"</text>
          <text transform="translate(778 238)">250</text><text transform="translate(830 222) rotate(28)">300</text>
          <text transform="translate(925 280) rotate(28)">700</text><text transform="translate(910 304) rotate(28)">FIELD DIM.</text>
          <text transform="translate(838 730) rotate(28)">500</text><text transform="translate(840 818) rotate(28)">CON. RED.</text>
          <text transform="translate(630 828) rotate(28)">ECC. RED.</text><text transform="translate(258 1054) rotate(28)">ECC. RED.</text>
          <text transform="translate(228 890) rotate(28)">STRAINER</text><text transform="translate(475 1030) rotate(28)">CON. RED.</text>
          <text transform="translate(317 836) rotate(28)">CHECK VALVE</text><text transform="translate(317 866) rotate(28)">(TYP.3)</text>
          <text transform="translate(503 904) rotate(28)">BALL VALVE 1/2"</text><text transform="translate(524 940) rotate(28)">(TYP.3)</text>
          <text transform="translate(983 1046) rotate(28)">Ø4" FRESH WATER</text><text transform="translate(935 1052) rotate(28)">CONT. SEE DWG. FP-003</text>
          <text transform="translate(911 1090) rotate(28)">Ø6" FIRE HYDRANT</text><text transform="translate(882 1110) rotate(28)">CONT. SEE DWG. FP-003</text>
          <text x="375" y="308">PG</text><text x="377" y="324">02</text><text x="363" y="650">PG</text><text x="365" y="666">02</text><text x="450" y="834">M</text><text x="1068" y="430">M</text>
        </g>
        <g class="note up">
          <text transform="translate(320 380) rotate(-30)">1800</text><text transform="translate(304 414) rotate(-30)">FIELD DIM.</text><text transform="translate(407 376) rotate(-30)">Ø1/2"</text><text transform="translate(395 714) rotate(-30)">Ø1/2"</text>
          <text transform="translate(686 170) rotate(-30)">1200</text><text transform="translate(834 84) rotate(-30)">600</text><text transform="translate(712 244) rotate(-30)">Ø4"</text>
          <text transform="translate(916 124) rotate(-30)">BOP. EL -1000</text><text transform="translate(914 190) rotate(-30)">BLIND FLANGE Ø4"</text>
          <text transform="translate(641 692) rotate(-30)">600</text><text transform="translate(526 758) rotate(-30)">600</text>
          <text transform="translate(887 978) rotate(-30)">1200</text><text transform="translate(588 1148) rotate(-30)">1300</text><text transform="translate(1118 1190) rotate(-30)">350</text>
          <text transform="translate(1116 432) rotate(-90)">250</text><text transform="translate(1138 456) rotate(-90)">FIELD DIM</text><text transform="translate(1116 520) rotate(-90)">250</text><text transform="translate(1116 570) rotate(-90)">250</text><text transform="translate(1116 684) rotate(-90)">800</text>
        </g>
      </g>
      <g transform="translate(2160 411)"><path class="g" d="M322 545l34-14v7l-34 14z" fill="#0c0"/><path class="y" d="M320 562l38-18v28l-38 21z" fill="#e80000"/></g>
    </svg>

    <p class="viewlabel">[−][Top][2D Wireframe]</p>

    <div class="doc-buttons">
      <button aria-label="Minimize drawing"><svg width="12" height="12" viewBox="0 0 12 12"><path d="M1 9h10" stroke="#fff" stroke-width="3"/></svg></button>
      <button aria-label="Restore drawing"><svg width="12" height="12" viewBox="0 0 12 12"><path d="M2 5h6v5H2zM4 2h7v6" stroke="#fff" stroke-width="2"/></svg></button>
      <button aria-label="Close drawing"><svg width="12" height="12" viewBox="0 0 12 12"><path d="M2 2l8 8M10 2l-8 8" stroke="#fff" stroke-width="2"/></svg></button>
    </div>

    <div class="viewcube">
      <svg width="132" height="144" viewBox="0 -8 132 144">
        <circle cx="66" cy="66" r="54" stroke="#454d56" stroke-width="12"/>
        <circle cx="66" cy="66" r="60" stroke="#3a3f42"/><circle cx="66" cy="66" r="47" stroke="#3a3f42"/>
        <rect x="40" y="40" width="52" height="52" fill="#b2b3b5" stroke="#8c8c88"/><rect x="50" y="50" width="32" height="32" fill="#a4a5a7"/>
        <g class="compass"><text x="66" y="17">N</text><text x="66" y="130">S</text><text x="10" y="74">W</text><text x="122" y="74">E</text></g>
        <text class="face" x="66" y="70">TOP</text>
      </svg>
      <button class="wcs">WCS <svg width="8" height="5" viewBox="0 0 8 5"><path d="M0 1h8L4 5z" fill="#bbb" stroke="#777"/></svg></button>
    </div>

    <div class="navbar">
      <button class="mini" aria-label="Close bar"><svg width="8" height="8" viewBox="0 0 8 8"><circle cx="4" cy="4" r="3"/><path d="M3 3l2 2M5 3L3 5"/></svg></button>
      <button aria-label="Steering wheel"><svg width="24" height="24" viewBox="0 0 24 24"><path d="M12 1h11v11a11 11 0 1 1-11-11z"/><circle cx="12" cy="12" r="6"/><path d="M4 20l4-4M20 20l-4-4M12 18v5"/></svg></button>
      <i class="dn"></i><hr>
      <button aria-label="Pan"><svg width="24" height="24" viewBox="0 0 24 24"><path d="M8 23L2 14q-2-3 1-2l4 3L4 5q1-2 3 0l3 7-1-10q2-2 3 0l1 10 3-9q2-1 2 1l-1 9 3-5q2-1 2 1l-4 10-2 4z"/></svg></button>
      <button aria-label="Zoom"><svg width="24" height="24" viewBox="0 0 24 24"><path d="M1 1l15 15M16 1L1 16M1 5V1h4M12 1h4v4M1 12v4h4"/><circle cx="16" cy="16" r="5"/><path d="M20 20l3 3" stroke-width="3"/></svg></button>
      <i class="dn"></i>
      <button aria-label="Orbit"><svg width="24" height="24" viewBox="0 0 24 24"><path d="M12 1l4 5h-2v16h-4V6H8zM10 10C-2 11-2 16 10 17M14 10c12 1 12 6 0 7M7 14l-4 3 4 3"/></svg></button>
      <i class="dn"></i><hr>
      <button aria-label="ShowMotion"><svg width="24" height="24" viewBox="0 0 24 24"><path d="M1 1h6v6H1zM9 1h6v6H9zM17 1h6v6h-6zM1 10h16v13H1z"/><path d="M6 13l7 4-7 4z" fill="#3a434b"/></svg></button>
      <button class="mini" aria-label="Options"><svg width="8" height="8" viewBox="0 0 8 8"><circle cx="4" cy="4" r="3"/><path d="M2 4h4"/></svg></button>
    </div>

    <div class="command">
      <p class="log">Autodesk DWG.&nbsp; This file is a TrustedDWG last saved by an Autodesk application or Autodesk licensed application.</p>
      <p class="log">Command:</p>
      <p class="log">Command:</p>
      <div class="command-bar">
        <span class="grip"></span>
        <button aria-label="Close command line"><svg width="10" height="10" viewBox="0 0 10 10"><path d="M1 1l8 8M9 1L1 9" stroke="#ddd" stroke-width="2"/></svg></button>
        <button aria-label="Customize command line"><svg width="16" height="16" viewBox="0 0 16 16"><path d="M5 6l8 8" stroke="#ddd" stroke-width="3"/><path d="M2 5l2 2h3V4L5 2" stroke="#ddd" stroke-width="2"/></svg></button>
        <label class="prompt" for="cmd"><svg width="14" height="14" viewBox="0 0 14 14"><path d="M1 1h12v12H1z" stroke="#888" fill="#aaa"/><path d="M3 4l3 3-3 3M7 10h4" stroke="#333"/></svg><i class="dn"></i></label>
        <input type="text" id="cmd" placeholder="Type a command" aria-label="Type a command">
        <button class="history" aria-label="Command history"><i class="up dark"></i></button>
      </div>
    </div>
  </div>

  <footer class="statusbar">
    <nav class="layouts"><a href="#model" class="active">Model</a><a href="#layout1">Layout1</a><button aria-label="New layout">+</button></nav>
    <div class="tray">
      <button class="coords">10906, 24811, 0</button>
      <button class="space">MODEL</button>
      <button class="on" aria-label="Grid"><svg class="ic" viewBox="0 0 16 16"><path d="M4 0v16M8 0v16M12 0v16M0 4h16M0 8h16M0 12h16"/></svg></button>
      <button aria-label="Snap"><svg class="ic" viewBox="0 0 16 16"><path d="M2 3h12M2 8h12M2 13h12" stroke-width="2" stroke-dasharray="2 3"/></svg></button><button class="arr" aria-label="Snap settings"><i class="dn"></i></button>
      <button class="sep" aria-label="Infer constraints"><svg class="ic" viewBox="0 0 16 16"><path d="M7 1h7v7H7z" fill="#ddd"/><path d="M5 9H1v5h5"/></svg></button>
      <button class="on" aria-label="Dynamic input"><svg class="ic" viewBox="0 0 16 16"><path d="M4 1v7M1 5h6"/><path d="M6 12h9" stroke-width="3"/></svg></button>
      <button class="on" aria-label="Ortho"><svg class="ic" viewBox="0 0 16 16"><path d="M2 1v13h13M2 9h5v5"/></svg></button>
      <button aria-label="Polar"><svg class="ic" viewBox="0 0 16 16"><circle cx="7" cy="8" r="6"/><path d="M15 8H7l6-6"/></svg></button><button class="arr" aria-label="Polar settings"><i class="dn"></i></button>
      <button class="on" aria-label="Isometric drafting"><svg class="ic" viewBox="0 0 16 16"><path d="M3 14L12 2M3 5l10 6"/></svg></button><button class="arr" aria-label="Isoplane"><i class="dn"></i></button>
      <button class="on" aria-label="Object snap tracking"><svg class="ic" viewBox="0 0 16 16"><path d="M2 14L13 2M2 14h13"/><path d="M5 9h3v3" /></svg></button>
      <button class="on" aria-label="Object snap"><svg class="ic" viewBox="0 0 16 16"><path d="M3 4h11v11H3z"/><path d="M1 1h5v5H1z" fill="#eee"/></svg></button><button class="arr" aria-label="Snap modes"><i class="dn"></i></button>
      <button class="sep" aria-label="Lineweight display"><svg class="ic" viewBox="0 0 16 16"><path d="M0 3h7M9 3h7M4 7h12" stroke-width="2"/><path d="M0 11h5M6 11h10M0 14h16" stroke-width="2"/></svg></button>
      <button class="on" aria-label="Transparency"><svg class="ic" viewBox="0 0 16 16"><path d="M1 1h14v14H1z"/><path d="M3 4h10M3 8h10M3 12h10" stroke-width="2" stroke-dasharray="2 2"/><path d="M5 6h8M5 10h8" stroke-width="2" stroke-dasharray="2 2"/></svg></button>
      <button aria-label="Selection cycling"><svg class="ic" viewBox="0 0 16 16"><path d="M5 6h11v10H5z" fill="#7ec8a0" stroke="none"/><path d="M3 0v7M0 3h7"/></svg></button>
      <button class="sep" aria-label="3D osnap"><svg class="ic" viewBox="0 0 16 16"><path d="M4 4h8v8H4zM4 4l3-3h8v8l-3 3M12 4l3-3"/><path d="M1 11h4v4H1z" stroke="#fcc67c" fill="#555"/></svg></button><button class="arr" aria-label="3D osnap modes"><i class="dn"></i></button>
      <button class="on" aria-label="Dynamic UCS"><svg class="ic" viewBox="0 0 16 16"><path d="M3 2v11h12M1 4l2-3 2 3M13 11l2 2-2 2M10 3L7 8h4l-2 3"/></svg></button>
      <button aria-label="Filter"><svg class="ic" viewBox="0 0 16 16"><path class="b" d="M2 5h8v9H2z" stroke-dasharray="2 1"/><path d="M2 5l4-3h8v8l-4 4M10 5l4-3"/></svg></button><button class="arr" aria-label="Filter list"><i class="dn"></i></button>
      <button class="on" aria-label="Gizmo"><svg class="ic" viewBox="0 0 16 16"><path d="M8 0v9l-6 5M8 9l6 5M3 6l5-3 5 3v6l-5 3-5-3z"/></svg></button><button class="arr" aria-label="Gizmo list"><i class="dn"></i></button>
      <button class="on sep" aria-label="Annotation visibility"><svg class="ic" viewBox="0 0 16 16"><path d="M7 1l6 14-6-4-6 4z" fill="#eee" stroke="none"/><circle cx="12" cy="4" r="3"/></svg></button>
      <button aria-label="Auto scale"><svg class="ic" viewBox="0 0 16 16"><path d="M7 2l6 13-6-4-6 4z" fill="#ddd" stroke="none"/><path d="M13 0l-3 4h4l-3 4"/></svg></button>
      <button aria-label="Annotation scale"><svg class="ic" viewBox="0 0 16 16"><path d="M8 2l6 13-6-4-6 4z" fill="#ddd" stroke="none"/></svg></button>
      <span class="pick"><select aria-label="Scale"><option>1:1 / 100%</option></select><i class="dn"></i></span>
      <button class="sep" aria-label="Workspace"><svg class="ic" viewBox="0 0 16 16"><circle cx="8" cy="8" r="4" stroke-width="3"/><path d="M8 0v3M8 13v3M0 8h3M13 8h3M2 2l3 3M14 2l-3 3M2 14l3-3M14 14l-3-3" stroke-width="2"/></svg></button><button class="arr" aria-label="Workspace list"><i class="dn"></i></button>
      <button class="sep" aria-label="Annotation monitor"><svg class="ic" viewBox="0 0 16 16"><path d="M8 0v16M0 8h16" stroke-width="2"/></svg></button>
      <button class="sep" aria-label="Units"><svg class="ic" viewBox="0 0 16 16"><path d="M5 0h7v3H9v2h3v2H9v2h3v2H9v2h3v3H5z" fill="#ddd" stroke="none"/></svg></button>
      <span class="pick units"><select aria-label="Units"><option>Decimal</option></select><i class="dn"></i></span>
      <button class="sep" aria-label="Quick properties"><svg class="ic" viewBox="0 0 16 16"><path d="M2 1h12v14H2zM2 4h12M4 7h2M8 7h4M4 10h2M8 10h4M4 13h2M8 13h4"/></svg></button>
      <button class="sep" aria-label="Lock UI"><svg class="ic" viewBox="0 0 16 16"><path d="M8 12H1V2h14v4"/><path d="M9 10h6v5H9z" fill="#ddd"/><path d="M10 10V7h4v3"/></svg></button><button class="arr" aria-label="Lock list"><i class="dn"></i></button>
      <button class="sep" aria-label="Isolate objects"><svg class="ic" viewBox="0 0 16 16"><path d="M1 1h6v5H1zM7 9l4 6H4z"/><circle cx="12" cy="7" r="3"/></svg></button>
      <button class="on sep" aria-label="Graphics performance"><svg class="ic" viewBox="0 0 16 16"><circle cx="8" cy="8" r="7"/><path d="M4 12l8-8M8 13l5-6"/></svg></button>
      <button class="sep" aria-label="Plot stamp"><svg class="ic" viewBox="0 0 16 16"><path d="M2 1h8v14H2z" fill="#8cc8f4"/><path d="M10 4h4v6h-4z" fill="#ddd"/><path d="M2 11h6v4H2z" fill="#f8c820" stroke="none"/><path d="M9 12l2 3 4-5" stroke="#10b020" stroke-width="2"/></svg></button>
      <button class="sep" aria-label="Clean screen"><svg class="ic" viewBox="0 0 16 16"><path d="M1 2h14v12H1zM9 7l3-2M9 5h3v3M7 9l-3 2M4 8v3h3"/></svg></button>
      <button aria-label="Customization"><svg class="ic" viewBox="0 0 16 16"><path d="M0 3h16M0 8h16M0 13h16" stroke-width="2"/></svg></button>
    </div>
  </footer>
</body>
</html>
```
FILE: styles.css
```css
* {
  box-sizing: border-box;
}
body {
  margin: 0;
  height: 100vh;
  display: flex;
  flex-direction: column;
  overflow: hidden;
  background: #383838;
  color: #e8e8e8;
  font-family: Roboto, "Open Sans", sans-serif;
  font-size: 12px;
  line-height: 16px;
}
button, select, input {
  font: inherit;
  color: inherit;
  background: none;
  border: 0;
  padding: 0;
  margin: 0;
}
button {
  display: flex;
  align-items: center;
  justify-content: center;
  white-space: nowrap;
}
a {
  color: inherit;
  text-decoration: none;
  white-space: nowrap;
}
h1, h2, p {
  margin: 0;
  font-size: 12px;
  font-weight: normal;
}
svg {
  fill: none;
  flex: none;
}
.defs {
  position: absolute;
}
.ic {
  width: 16px;
  height: 16px;
  overflow: visible;
}
.ig {
  width: 32px;
  height: 32px;
}
.b {
  stroke: #7cc4f8;
}
.bf {
  fill: #7cc4f8;
  stroke: none;
}
.wf {
  fill: #fff;
  stroke: none;
}

/* little arrows */
.dn, .up, .rt {
  flex: none;
  width: 0;
  height: 0;
  border: 3px solid transparent;
  border-top: 4px solid #fff;
  border-bottom: 0;
}
.up {
  border-top: 0;
  border-bottom: 4px solid #fff;
}
.up.dark {
  border-bottom-color: #222;
}
.rt {
  border: 4px solid transparent;
  border-left: 5px solid #fff;
  border-right: 0;
}

/* title bar */
.titlebar {
  height: 24px;
  flex: none;
  display: flex;
  background: #5e2015;
  position: relative;
}
.app-button {
  width: 41px;
  height: 41px;
  flex: none;
  border: 1px solid #1a0a0a;
  background: linear-gradient(#8a8a8a, #b4b4b4 60%, #8c8c8c);
  position: relative;
  z-index: 2;
}
.qat {
  display: flex;
  align-items: center;
  width: 310px;
  padding-left: 5px;
  background: #a0a0a0;
  border-top: 1px solid #bbb;
  border-right: 1px solid #888;
}
.qat button {
  width: 24px;
}
.qat .tiny {
  width: 13px;
}
.qat button:last-child {
  width: 18px;
}
.title {
  flex: 1;
  display: flex;
  justify-content: center;
  align-items: center;
  gap: 12px;
  color: #0c0403;
}
.infocenter {
  display: flex;
  width: 446px;
  background: #a0a0a0;
  border: 1px solid #888;
}
.infocenter button {
  width: 24px;
}
.infocenter .expand {
  width: 13px;
}
.infocenter .keyword {
  width: 180px;
  padding: 0 2px;
  background: #6c6c6c;
  border: 1px solid #333;
  font-style: italic;
}
.keyword::placeholder {
  color: #d4d4d4;
}
.infocenter .signin {
  width: 116px;
  gap: 8px;
  margin-right: 6px;
}
.signin span {
  flex: 1;
  text-align: left;
}
.infocenter .wide {
  width: 40px;
  gap: 5px;
}
.window-buttons {
  display: flex;
  width: 163px;
  padding-left: 25px;
}
.window-buttons button {
  flex: 1;
}

/* ribbon tabs */
.ribbon-tabs {
  height: 21px;
  flex: none;
  display: flex;
  padding-left: 46px;
  background: #535353;
  border-top: 1px solid #333;
  border-bottom: 1px solid #2c2c2c;
  color: #ccc;
}
.ribbon-tabs a {
  padding: 2px 10px;
}
.ribbon-tabs .active {
  padding: 0 9px;
  margin: 2px 0 -1px;
  color: #fff;
  background: linear-gradient(#7a7a7a, #5e5e5e);
  border: 1px solid #2c2c2c;
  border-bottom: 0;
  border-radius: 3px 3px 0 0;
}
.ribbon-toggle {
  gap: 5px;
  margin-left: 22px;
}
.ribbon-toggle span {
  width: 14px;
  height: 8px;
  background: #eee;
  border-radius: 2px;
  display: flex;
  align-items: center;
  justify-content: center;
}

/* ribbon */
.ribbon {
  height: 98px;
  flex: none;
  display: grid;
  grid-template-columns: 225px 250px 189px 273px 162px 264px 68px 94px 77px 60px 1fr;
  padding-left: 1px;
  background: linear-gradient(#545454, #383838);
  border-bottom: 1px solid #8a8a8a;
}
.ribbon svg {
  stroke: #dcdcdc;
}
.panel {
  display: flex;
  flex-direction: column;
  background: #5c5c5c;
  border-left: 1px solid #777;
  border-right: 1px solid #3c3c3c;
}
.panel-body {
  flex: 1;
  display: grid;
  padding-top: 4px;
}
.panel h2 {
  height: 19px;
  display: flex;
  align-items: center;
  justify-content: center;
  gap: 6px;
  position: relative;
  background: linear-gradient(#484848, #505050);
  color: #f0f0f0;
}
.panel h2 .dn {
  border-width: 4px 4px 0;
}
.launcher {
  position: absolute;
  right: 4px;
  bottom: 5px;
}
.draw .panel-body {
  grid-template-columns: 42px 44px 56px 38px 1fr;
}
.modify .panel-body {
  grid-template-columns: 72px 69px 76px 1fr;
}
.annotation .panel-body {
  grid-template-columns: 46px 60px 1fr;
}
.layers .panel-body {
  grid-template-columns: 61px 1fr;
}
.block .panel-body {
  grid-template-columns: 40px 1fr;
}
.properties .panel-body {
  grid-template-columns: 62px 18px 1fr;
}
.groups .panel-body {
  grid-template-columns: 41px 1fr;
}
.utilities .panel-body {
  grid-template-columns: 71px 1fr;
}
.clipboard .panel-body {
  grid-template-columns: 57px 1fr;
}
.view .panel-body {
  padding-left: 16px;
}
.big {
  flex-direction: column;
  justify-content: flex-start;
  line-height: 15px;
  padding-top: 3px;
}
.big .ig {
  margin-bottom: 4px;
}
.big .dn {
  margin-top: 2px;
}
.col {
  display: grid;
  grid-template-rows: repeat(3, 24px);
  padding-left: 5px;
}
.utilities .col, .clipboard .col {
  padding-left: 2px;
}
.small {
  justify-content: flex-start;
  gap: 5px;
}
.small .dn {
  margin: 0 8px 0 auto;
}
.modify .small .dn {
  margin-right: 12px;
}
.draw .small .dn {
  margin-left: 3px;
}
.small.on {
  width: 23px;
  margin-left: -3px;
  padding-left: 3px;
  background: #5a86b8;
  border: 1px solid #223a5c;
}
.combo {
  height: 22px;
  display: flex;
  align-items: center;
  margin-top: 1px;
  padding: 0 3px 0 4px;
  background: linear-gradient(#6a6a6a, #505050);
  border: 1px solid #2a3038;
}
.combo select {
  flex: 1;
  min-width: 0;
  appearance: none;
}
.combo .dn {
  border-width: 4px 4px 0;
}
.swatch {
  width: 14px;
  height: 14px;
  margin: 0 5px 0 6px;
  background: #ff0;
  border: 1px solid #111;
}
.swatch.pale {
  width: 16px;
  height: 16px;
  margin: 0 10px 0 8px;
  border-color: #aaa;
}
.rule {
  width: 64px;
  height: 1px;
  margin-right: 2px;
  background: #fff;
}
.layer-col, .prop-combos {
  padding-left: 0;
}
.layer-combo {
  margin-right: 3px;
}
.icon-row {
  display: flex;
  padding-left: 4px;
  gap: 8px;
}
.prop-icons {
  padding-left: 0;
  align-items: center;
}

/* file tabs */
.file-tabs {
  height: 30px;
  flex: none;
  display: flex;
  padding: 4px 10px 0 20px;
  background: linear-gradient(#303030, #3c3c3c 25px, #585858 26px);
  font-size: 11px;
}
.file-tabs a {
  display: flex;
  align-items: center;
  height: 22px;
  min-width: 125px;
  padding: 0 16px 0 11px;
  color: #b8b8b8;
  background: linear-gradient(#5c5c5c, #4c4c4c);
  border-right: 1px solid #333;
  border-radius: 10px 10px 4px 4px;
}
.file-tabs a.active {
  color: #fff;
  background: linear-gradient(#7e7e7e, #585858);
}
.file-tabs b {
  margin-left: 12px;
  color: #2c2c2c;
}
.file-tabs .add {
  width: 26px;
  height: 15px;
  margin: 4px auto 0 6px;
  background: #555;
  border-radius: 2px 8px 2px 8px;
  font-weight: bold;
  font-size: 14px;
}
.file-tabs .more {
  height: 18px;
}

/* drawing area */
.workspace {
  flex: 1;
  min-height: 0;
  position: relative;
  background: #212830;
  border-right: 7px solid #dfe7f1;
}
.drawing {
  display: block;
  width: 100%;
  height: 100%;
  stroke-width: 4;
}
.drawing .faint {
  stroke: #2a3037;
  stroke-width: 3;
}
.drawing .y {
  stroke: #e0e000;
}
.drawing .c {
  stroke: #00d8d8;
}
.drawing .r {
  stroke: #e80000;
}
.drawing .g {
  stroke: #0d0;
}
.drawing .w {
  stroke: #ddd;
}
.note, .tag {
  fill: #fff;
  stroke: none;
  font-family: "Liberation Sans Narrow", "Liberation Sans", sans-serif;
  font-size: 16px;
  font-weight: bold;
}
.note.up {
  font-style: italic;
}
.tag {
  font-size: 24px;
  font-weight: normal;
}
.north {
  fill: #0d0;
  stroke: none;
  font: bold 50px "Liberation Serif", serif;
}
.viewlabel {
  position: absolute;
  left: 3px;
  top: 6px;
}
.doc-buttons {
  position: absolute;
  top: 9px;
  right: 10px;
  display: flex;
  gap: 8px;
}
.viewcube {
  position: absolute;
  top: 32px;
  right: 17px;
  display: flex;
  flex-direction: column;
  align-items: center;
  gap: 17px;
}
.compass {
  fill: #b4b6b8;
  font: bold 21px "Liberation Sans", Arial, sans-serif;
  text-anchor: middle;
}
.face {
  fill: #484848;
  font: bold 12px Roboto, sans-serif;
  text-anchor: middle;
}
.wcs {
  width: 48px;
  height: 18px;
  gap: 5px;
  color: #555;
  background: #a6a6a8;
  border: 1px solid #808080;
  border-radius: 4px;
  font-size: 11px;
}
.navbar {
  position: absolute;
  right: 4px;
  top: 236px;
  width: 32px;
  height: 212px;
  display: flex;
  flex-direction: column;
  align-items: center;
  justify-content: space-between;
  padding: 2px;
  background: #596066;
  border: 1px solid #70767a;
  border-radius: 4px;
}
.navbar svg {
  stroke: #3a434b;
}
.navbar .dn {
  border-top-color: #3a434b;
}
.navbar hr {
  width: 26px;
  margin: 0;
  border: 0;
  border-top: 1px solid #70767a;
}
.navbar .mini {
  align-self: flex-end;
}

/* command line */
.command {
  position: absolute;
  left: 572px;
  bottom: 1px;
  width: 776px;
  font-family: "Liberation Mono", monospace;
}
.log {
  width: fit-content;
  max-width: 720px;
  margin: 5px -8px 0 60px;
  padding: 0 2px;
  line-height: 15px;
  background: #55585a;
  border-radius: 2px;
  color: #d8d8d8;
}
.command-bar {
  display: flex;
  align-items: center;
  height: 26px;
  margin-top: 2px;
  background: #bcbdbf;
  border: 1px solid #555;
}
.command-bar button {
  width: 22px;
  height: 24px;
  background: #444;
}
.command-bar .grip {
  width: 9px;
  height: 24px;
  background: radial-gradient(circle, #999 1px, #444 1px) 0 0 / 4px 4px;
}
.command-bar .prompt {
  display: flex;
  align-items: center;
  gap: 4px;
  padding: 0 4px;
}
.prompt .dn {
  border-top-color: #666;
}
.command-bar input {
  flex: 1;
  padding: 0 4px;
  font-style: italic;
}
.command-bar input::placeholder {
  color: #6c6c6c;
}
.command-bar .history {
  width: 14px;
  background: none;
}

/* status bar */
.statusbar {
  height: 26px;
  flex: none;
  display: flex;
  background: #383838;
  border-top: 1px solid #666;
}
.layouts {
  display: flex;
  width: 712px;
  height: 18px;
  padding-left: 14px;
  color: #b8b8b8;
}
.layouts a {
  padding: 0 11px;
  background: #555;
  border-radius: 0 0 8px 8px;
}
.layouts .active {
  padding: 0 10px;
  color: #fff;
  font-weight: bold;
  background: linear-gradient(#555, #888);
}
.layouts button {
  width: 22px;
  margin-left: 4px;
  background: #4c4c4c;
  border-radius: 0 0 8px 2px;
  font-weight: bold;
}
.tray {
  flex: 1;
  display: flex;
  background: #4e4e4e;
  border-left: 1px solid #777;
}
.tray svg {
  stroke: #e4e4e4;
}
.tray button {
  width: 24px;
  border: solid #4e4e4e;
  border-width: 1px 0;
}
.tray .arr {
  width: 17px;
}
.tray .on {
  background: #5b8bc0;
}
.tray .sep {
  border-left: 1px solid #777;
}
.units ~ .sep {
  width: 26px;
}
.tray .coords {
  flex: 1;
  justify-content: flex-end;
  padding-right: 5px;
}
.tray .space {
  width: 52px;
  border: solid #777;
  border-width: 0 1px;
}
.pick {
  display: flex;
  align-items: center;
  gap: 4px;
  padding: 0 8px 0 4px;
}
.pick select {
  appearance: none;
}
.pick.units {
  gap: 14px;
  padding: 0 4px 0 6px;
}
```
